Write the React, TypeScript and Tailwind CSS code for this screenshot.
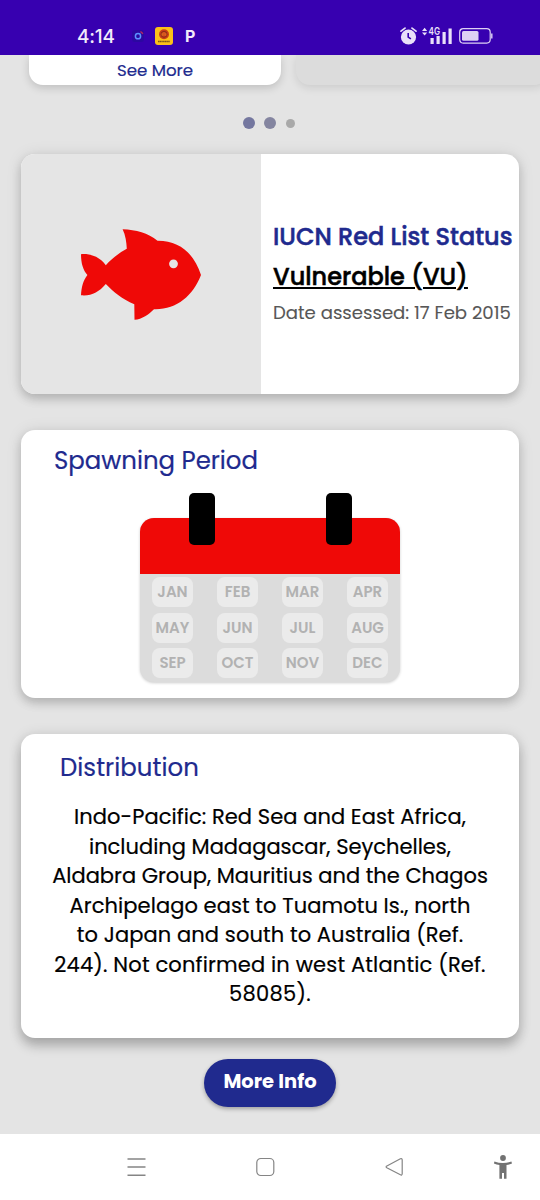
import React from 'react';

const months = ['JAN', 'FEB', 'MAR', 'APR', 'MAY', 'JUN', 'JUL', 'AUG', 'SEP', 'OCT', 'NOV', 'DEC'];

const distribution = [
  { text: 'Indo-Pacific: Red Sea and East Africa,', tracking: 'tracking-[0.06px]' },
  { text: 'including Madagascar, Seychelles,', tracking: 'tracking-normal' },
  { text: 'Aldabra Group, Mauritius and the Chagos', tracking: 'tracking-normal' },
  { text: 'Archipelago east to Tuamotu Is., north', tracking: 'tracking-[0.07px]' },
  { text: 'to Japan and south to Australia (Ref.', tracking: 'tracking-[0.09px]' },
  { text: '244). Not confirmed in west Atlantic (Ref.', tracking: 'tracking-[0.16px]' },
  { text: '58085).', tracking: 'tracking-[0.25px]' },
];

const cardShadow = 'shadow-[0_5px_10px_rgba(0,0,0,0.17),0_1px_16px_rgba(0,0,0,0.1)]';

function StatusBar() {
  return (
    <header className="relative z-10 flex h-[55px] shrink-0 items-start bg-[#3700b0] pl-[77px] pt-[24px] font-['Inter',sans-serif] text-[#f1eafa]">
      <span className="w-[55px] whitespace-nowrap pt-px text-[19px] font-medium leading-[24px] tracking-[-0.2px]">4:14</span>
      <svg className="h-[24px] w-[12px]" viewBox="0 0 12 24">
        <rect x="0" y="6" width="12" height="12" rx="3" fill="#2b08a0" />
        <circle cx="6" cy="12.2" r="2.6" fill="none" stroke="#5b91ff" strokeWidth="1.5" />
        <path d="M8.5 7.5 11 9.8" stroke="#ba285f" strokeWidth="1.3" />
      </svg>
      <svg className="ml-[11px] mt-[3px] h-[18px] w-[18px]" viewBox="0 0 18 18">
        <rect width="18" height="18" rx="3" fill="#fcc018" />
        <circle cx="9" cy="7.3" r="5" fill="#c93d18" />
        <circle cx="9" cy="7.3" r="3" fill="none" stroke="#8e2a19" />
        <path d="M7.2 8.8V6.2M9 8.8V5.2M10.8 8.8V6.2" stroke="#ed8b26" strokeWidth=".7" />
        <path d="M3 14.5h12" stroke="#7d5515" strokeWidth="1.3" strokeDasharray="1.4 .3" />
      </svg>
      <span className="ml-[12px] w-[15px] text-[16px] font-bold leading-[24px]">P</span>
      <svg className="ml-[200px] mt-[3px] h-[18px] w-[17px]" viewBox="0 0 17 18">
        <circle cx="8.5" cy="10" r="7.6" fill="#e9e0f9" />
        <path d="m1 4.2 4-3.1M16 4.2l-4-3.1" stroke="#e9e0f9" strokeWidth="1.7" strokeLinecap="round" />
        <path d="M8.2 6v4.1l2.7 1.8" fill="none" stroke="#3700b0" strokeWidth="1.6" />
      </svg>
      <svg className="ml-[5px] h-[21px] w-[31px] overflow-visible" viewBox="0 -2 31 21" fill="#e9e0f9">
        <path d="m0 5 2.6-3.2L5.2 5ZM0 6.6h5.2L2.6 9.4Z" />
        <rect x="8.5" y="12" width="3.2" height="6" />
        <rect x="14.5" y="10" width="3.2" height="8" />
        <rect x="20.5" y="6" width="3.2" height="12" />
        <rect x="26.5" y="2.5" width="3.2" height="15.5" />
        <text x="6.6" y="8.8" fontSize="10.5" fontWeight="600" textLength="11.5" lengthAdjust="spacingAndGlyphs">4G</text>
      </svg>
      <svg className="ml-[6px] mt-[4px] h-[16px] w-[34px]" viewBox="0 0 34 16">
        <rect x=".7" y=".7" width="30.5" height="14.4" rx="3.5" fill="none" stroke="#ded1f4" strokeWidth="1.2" />
        <rect x="3" y="3" width="16.5" height="9.8" rx="1.5" fill="#ded1f4" />
        <path d="M32.8 5.5v5" stroke="#ded1f4" strokeWidth="1.4" />
      </svg>
    </header>
  );
}

function Carousel() {
  return (
    <>
      <div className="flex shrink-0 gap-[15px] pl-[29px]">
        <div className="h-[30px] w-[252px] shrink-0 rounded-b-[14px] bg-white pt-[3px] text-center text-[16.6px] leading-[25px] text-[#202a8e] shadow-[0_3px_9px_rgba(0,0,0,0.16)] [-webkit-text-stroke:0.2px_#202a8e]">
          See More
        </div>
        <div className="h-[30px] w-[252px] shrink-0 rounded-b-[14px] bg-[#dcdcdc] shadow-[0_3px_9px_rgba(0,0,0,0.1)]" />
      </div>
      <div className="flex h-[69px] shrink-0 items-center gap-[9px] pl-[243px] pt-[7px]">
        <i className="size-[12px] rounded-full bg-[#74779f]" />
        <i className="size-[12px] rounded-full bg-[#8485a0]" />
        <i className="ml-px size-[9px] rounded-full bg-[#a9a9a9]" />
      </div>
    </>
  );
}

function StatusCard() {
  return (
    <section className={'mx-[21px] flex h-[240px] shrink-0 overflow-hidden rounded-[14px] bg-white ' + cardShadow}>
      <div className="w-[240px] shrink-0 bg-[#e5e5e5]">
        <svg className="h-[240px] w-[240px]" viewBox="0 0 240 240">
          <path
            d="M60 100.2C70.5 99.5 79 103.5 84.8 111.2C91 104.5 98 99 105.8 94.8C105.5 88 104.5 81 101.6 75.2C115 75.8 127 78.8 136.5 86.7C158 86.5 173 99 180 121C172 142 155 156 133 155.2C128 160 121 165.5 113.5 165.7L113.3 150.3C101 145 93 138.5 84.8 130C78 138.2 70 142.3 60 141.3C60.5 133 62 127 66.4 121C62 116 60 109 60 100.2Z"
            fill="#ef0907"
          />
          <circle cx="152.5" cy="109.8" r="4.4" fill="#e5e5e5" />
        </svg>
      </div>
      <div className="whitespace-nowrap pl-[12px] pt-[65px]">
        <h2 className="h-[38px] text-[24px] font-medium leading-[35px] text-[#202a8e] [-webkit-text-stroke:0.5px_#202a8e]">IUCN Red List Status</h2>
        <p className="h-[39px] text-[24px] font-medium leading-[40px] text-black underline decoration-[1.5px] underline-offset-[2px] [-webkit-text-stroke:0.5px_#000]">Vulnerable (VU)</p>
        <p className="text-[18.1px] leading-[33px] text-[#575757] [-webkit-text-stroke:0.1px_#575757]">Date assessed: 17 Feb 2015</p>
      </div>
    </section>
  );
}

function SpawningCard() {
  return (
    <section className={'mx-[21px] mt-[36px] flex h-[268px] shrink-0 flex-col items-center rounded-[14px] bg-white ' + cardShadow}>
      <h2 className="w-full pl-[33px] pt-[13px] text-[24.4px] leading-[36px] text-[#202a8e] [-webkit-text-stroke:0.2px_#202a8e]">Spawning Period</h2>
      <div className="relative mt-[39px] h-[164px] w-[260px] rounded-[14px] bg-[#dcdcdc] shadow-[0_1px_3px_rgba(0,0,0,0.2)]">
        <div className="h-[56px] rounded-t-[14px] bg-[#ef0907]" />
        <i className="absolute left-[49px] top-[-25px] h-[52px] w-[26px] rounded-[5px] bg-black" />
        <i className="absolute right-[48px] top-[-25px] h-[52px] w-[26px] rounded-[5px] bg-black" />
        <div className="grid grid-cols-4 gap-x-[24px] gap-y-[5.5px] px-[12px] pt-[3px]">
          {months.map((month) => (
            <span key={month} className="flex h-[30px] w-[41px] items-center justify-center rounded-[8px] bg-[#ebebeb] pt-px text-[15px] font-semibold text-[#b2b2b2]">
              {month}
            </span>
          ))}
        </div>
      </div>
    </section>
  );
}

function DistributionCard() {
  return (
    <section className="mx-[21px] mt-[36px] h-[304px] shrink-0 rounded-[14px] bg-white shadow-[0_8px_12px_rgba(0,0,0,0.22),0_1px_14px_rgba(0,0,0,0.12)]">
      <h2 className="pl-[39px] pt-[16px] text-[24.4px] leading-[36px] tracking-[0.06px] text-[#202a8e] [-webkit-text-stroke:0.2px_#202a8e]">Distribution</h2>
      <div className="mt-[16.4px] flex flex-col items-center whitespace-nowrap text-[21px] leading-[29.45px] text-black [-webkit-text-stroke:0.2px_#000]">
        {distribution.map((line) => (
          <span key={line.text} className={line.tracking}>{line.text}</span>
        ))}
      </div>
    </section>
  );
}

function NavigationBar() {
  return (
    <nav className="mt-auto flex h-[66px] shrink-0 items-center bg-white pl-[126px] text-[#858585]">
      <svg className="h-[20px] w-[22px]" viewBox="0 0 22 20" stroke="currentColor" strokeWidth="1.4">
        <path d="M1.5 2h18M1.5 10h18M1.5 18.3h18" />
      </svg>
      <svg className="ml-[107px] h-[20px] w-[20px]" viewBox="0 0 20 20" fill="none" stroke="currentColor" strokeWidth="1.2">
        <rect x="1.8" y="1.5" width="17" height="17" rx="4" />
      </svg>
      <svg className="ml-[110px] h-[20px] w-[20px]" viewBox="0 0 20 20" fill="none" stroke="currentColor" strokeWidth="1.2" strokeLinejoin="round">
        <path d="M1.4 9.2 15.4 1.8Q17 1 17.2 2.8V16.7Q17 18.6 15.4 17.8L1.8 10.7Q.7 10 1.4 9.2Z" />
      </svg>
      <svg className="ml-[88px] h-[26px] w-[20px]" viewBox="0 0 20 26" fill="#727272">
        <circle cx="10" cy="4" r="2.9" />
        <path d="M1.4 7.6Q10 10.6 18.4 7.6L19 9.4Q16 10.7 13.5 10.9V24.8H11V19H9V24.8H6.4V10.9Q3.7 10.7.9 9.4Z" />
      </svg>
    </nav>
  );
}

export default function App() {
  return (
    <main className="flex h-[1200px] w-[540px] flex-col overflow-hidden bg-[#e4e4e4] font-['Poppins','Inter',sans-serif]">
      <StatusBar />
      <Carousel />
      <StatusCard />
      <SpawningCard />
      <DistributionCard />
      <button className="mx-auto mt-[21px] h-[48px] w-[132px] shrink-0 whitespace-nowrap rounded-full bg-[#202a8e] pb-[3px] text-[19.5px] font-bold leading-[24px] text-white shadow-[0_2px_4px_rgba(0,0,0,0.3)]">
        More Info
      </button>
      <NavigationBar />
    </main>
  );
}
